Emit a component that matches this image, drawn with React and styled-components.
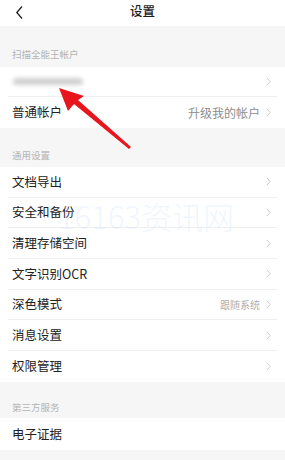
import React from "react";
import styled, { createGlobalStyle } from "styled-components";

const Global = createGlobalStyle`
  html, body { margin: 0; padding: 0; background: #f6f6f6; }
  body { font-family: "Noto Sans CJK SC", "Noto Sans", sans-serif; }
`;

const Page = styled.div`
  position: relative;
  width: 285px;
  height: 460px;
  overflow: hidden;
  background: #f6f6f6;
`;

const Header = styled.div`
  height: 26px;
  background: #fff;
  display: flex;
  align-items: center;
  justify-content: center;
  position: relative;
`;

const Back = styled.div`
  position: absolute;
  left: 14px;
  top: 5px;
  width: 12px;
  height: 15px;
  display: flex;
`;

const Title = styled.div`
  font-size: 12.5px;
  color: #1f1f1f;
  font-weight: 500;
  line-height: 1;
  margin-top: -4px;
`;

const SectionLabel = styled.div`
  height: ${(p) => p.$h}px;
  display: flex;
  align-items: flex-end;
  padding: 0 0 ${(p) => p.$pb}px 12px;
  box-sizing: border-box;
  font-size: 9.5px;
  color: #b4b4b4;
  line-height: 1;
`;

const Group = styled.div`
  background: #fff;
`;

const Row = styled.div`
  height: ${(p) => p.$h || 30.7}px;
  margin: 0 8px;
  padding: 0 6px 0 4px;
  display: flex;
  align-items: center;
  box-sizing: border-box;
  border-bottom: ${(p) => (p.$last ? "none" : "1px solid #efefef")};
`;

const Label = styled.div`
  flex: 1;
  font-size: 12.5px;
  color: #222;
  line-height: 1;
`;

const Blurred = styled.div`
  flex: 1;
  display: flex;
`;

const BlurBar = styled.div`
  width: 70px;
  height: 7px;
  border-radius: 4px;
  background: #d0d0d0;
  filter: blur(2px);
  margin-left: 1px;
`;

const Value = styled.div`
  font-size: ${(p) => p.$size || 12}px;
  color: ${(p) => p.$color || "#8d8d8d"};
  margin-right: 6px;
  line-height: 1;
`;

const Chev = () => (
  <svg width="5" height="9" viewBox="0 0 5 9">
    <path d="M0.8 0.8 L4.2 4.5 L0.8 8.2" fill="none" stroke="#cacaca" strokeWidth="1" />
  </svg>
);

const Watermark = styled.div`
  position: absolute;
  left: 58px;
  top: 193px;
  font-family: "Noto Sans CJK SC", "Noto Sans", sans-serif;
  font-size: 31px;
  font-weight: 300;
  color: rgba(200, 220, 248, 0.28);
  pointer-events: none;
  white-space: nowrap;
`;

const Arrow = styled.svg`
  position: absolute;
  left: 0;
  top: 0;
  pointer-events: none;
`;

const Bottom = styled.div`
  height: 10px;
  background: #f6f6f6;
`;

const items = [
  { t: "文档导出" },
  { t: "安全和备份" },
  { t: "清理存储空间" },
  { t: "文字识别OCR" },
  { t: "深色模式", v: "跟随系统" },
  { t: "消息设置" },
  { t: "权限管理", last: true },
];

export default function App() {
  return (
    <Page>
      <Global />
      <Header>
        <Back>
          <svg width="12" height="15" viewBox="0 0 12 15">
            <path d="M8 1.5 L2.8 7.5 L8 13.5" fill="none" stroke="#222" strokeWidth="1.3" />
          </svg>
        </Back>
        <Title>设置</Title>
      </Header>
      <SectionLabel $h={41} $pb={8}>扫描全能王帐户</SectionLabel>
      <Group>
        <Row $h={30}>
          <Blurred><BlurBar /></Blurred>
          <Chev />
        </Row>
        <Row $h={31} $last>
          <Label>普通帐户</Label>
          <Value>升级我的帐户</Value>
          <Chev />
        </Row>
      </Group>
      <SectionLabel $h={39} $pb={7}>通用设置</SectionLabel>
      <Group>
        {items.map((it) => (
          <Row key={it.t} $last={it.last}>
            <Label>{it.t}</Label>
            {it.v && (
              <Value $size={10} $color="#b0b0b0">{it.v}</Value>
            )}
            <Chev />
          </Row>
        ))}
      </Group>
      <SectionLabel $h={36} $pb={5}>第三方服务</SectionLabel>
      <Group>
        <Row $h={32} $last>
          <Label>电子证据</Label>
        </Row>
      </Group>
      <Bottom />
      <Watermark>16163资讯网</Watermark>
      <Arrow width="285" height="460" viewBox="0 0 285 460">
        <defs>
          <filter id="soft" x="-20%" y="-20%" width="140%" height="140%">
            <feGaussianBlur stdDeviation="0.6" />
          </filter>
        </defs>
        <g filter="url(#soft)">
          <path d="M59 88 L84 96 L78 100 L131 147 L129 149 L74 104 L68 111 Z" fill="#e8141c" />
        </g>
      </Arrow>
    </Page>
  );
}
